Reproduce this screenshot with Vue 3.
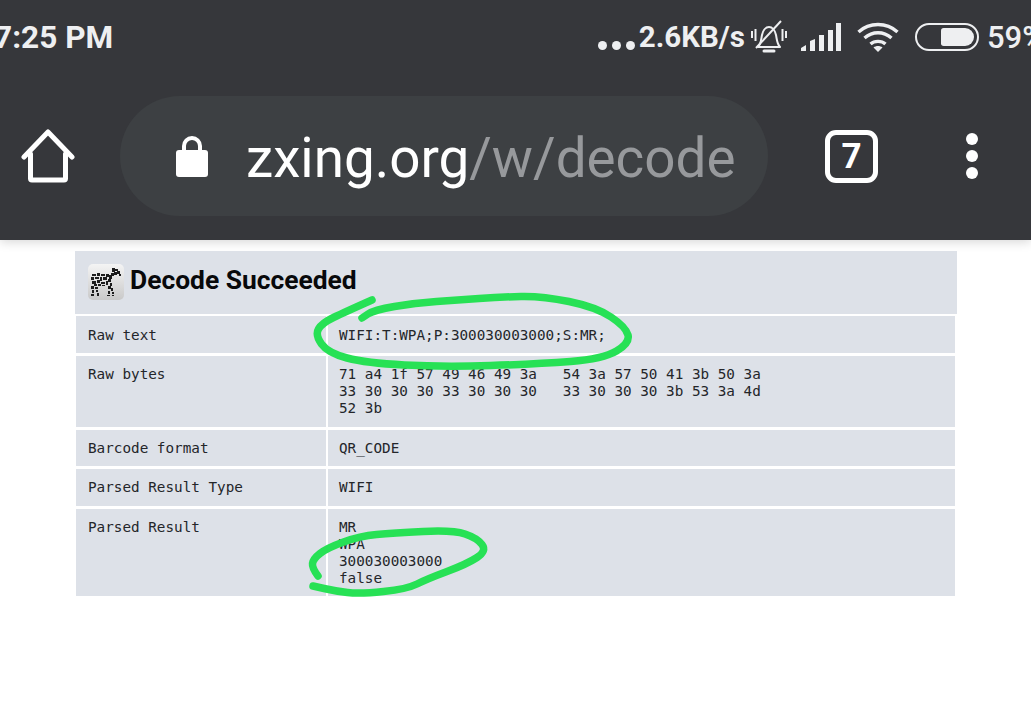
<script setup>
const rows = [
  { label: 'Raw text', value: 'WIFI:T:WPA;P:300030003000;S:MR;', cls: 'row-raw' },
  { label: 'Raw bytes', value: '71 a4 1f 57 49 46 49 3a   54 3a 57 50 41 3b 50 3a\n33 30 30 30 33 30 30 30   33 30 30 30 3b 53 3a 4d\n52 3b', cls: 'row-bytes' },
  { label: 'Barcode format', value: 'QR_CODE', cls: 'row-one' },
  { label: 'Parsed Result Type', value: 'WIFI', cls: 'row-type' },
  { label: 'Parsed Result', value: 'MR\nWPA\n300030003000\nfalse', cls: 'row-parsed' }
]

// zebra logo blobs, x y w h in a 36 box
const zebra = [
  [24, 4, 3, 4], [27, 5, 3, 2], [29, 7, 3, 3], [26, 8, 3, 3], [31, 10, 2, 2], [23, 9, 3, 3], [21, 11, 3, 4],
  [4, 10, 4, 2], [9, 9, 3, 3], [13, 10, 4, 2], [18, 10, 3, 3], [3, 13, 3, 3], [7, 13, 4, 2], [12, 13, 2, 4],
  [15, 13, 4, 3], [20, 15, 3, 3], [4, 17, 4, 3], [9, 16, 3, 3], [13, 18, 4, 2], [18, 17, 2, 4], [22, 19, 2, 3],
  [6, 20, 3, 2], [10, 20, 3, 2], [14, 21, 3, 1], [3, 22, 3, 3], [7, 23, 3, 2], [20, 22, 3, 3], [23, 24, 2, 3],
  [4, 26, 2, 3], [8, 26, 2, 2], [20, 27, 2, 3], [24, 28, 2, 2], [3, 30, 3, 2], [9, 29, 2, 3], [19, 31, 3, 1], [24, 31, 2, 1]
]

// hand drawn marker strokes, smoothed through the midpoints
const smooth = (pts) => {
  let d = `M${pts[0][0]} ${pts[0][1]}`
  for (let i = 1; i < pts.length - 1; i++) {
    const mx = (pts[i][0] + pts[i + 1][0]) / 2
    const my = (pts[i][1] + pts[i + 1][1]) / 2
    d += `Q${pts[i][0]} ${pts[i][1]} ${mx} ${my}`
  }
  const last = pts[pts.length - 1]
  return d + `L${last[0]} ${last[1]}`
}

const inkTop = smooth([
  [372, 300], [345, 312], [322, 323], [315, 335], [328, 353], [366, 363], [443, 367], [538, 364], [603, 359],
  [630, 343], [626, 327], [596, 307], [542, 296], [500, 297], [458, 300], [415, 303], [374, 310], [362, 318]
])
const inkBottom = smooth([
  [318, 576], [312, 568], [313, 559], [327, 548], [360, 536], [393, 533], [453, 530], [477, 538], [487, 551],
  [467, 564], [427, 579], [407, 589], [360, 594], [335, 591], [313, 586]
])
</script>

<template>
  <div class="page">
    <header class="chrome">
      <div class="status">
        <span class="clock">7:25 PM</span>
        <div class="status-right">
          <span class="more"><i></i><i></i><i></i></span>
          <span class="speed">2.6KB/s</span>
          <svg class="bell" width="36" height="34" viewBox="0 0 36 34" fill="none" stroke="#eeeff1" stroke-width="2">
            <path d="M7 27c3-3 3-7 4-12 1-5 4-8 7-8s6 3 7 8c1 5 1 9 4 12z" stroke-linejoin="round" />
            <path d="M13 31h10" stroke-width="3" stroke-linecap="round" />
            <path d="M5 28 30 1" stroke-width="2" />
            <path d="M1 11v7M4.500 9v12M31.500 9v12M35 11v7" stroke-width="2" />
          </svg>
          <svg class="signal" width="40" height="28" viewBox="0 0 40 28" fill="#eeeff1">
            <path d="M0 28v-3l5-3v6zM9 28v-10l5-2v12zM18 28v-16h5v16zM27 28v-21h5v21zM35 28v-28h5v28z" />
          </svg>
          <svg class="wifi" width="42" height="30" viewBox="0 0 42 30" fill="none" stroke="#eeeff1" stroke-width="3.400">
            <path d="M1.500 10c11-10 28-10 39 0" />
            <path d="M7.500 16c8-7 19-7 27 0" />
            <path d="M13.500 22c4-3.500 11-3.500 15 0" />
            <path d="M21 30l-4.500-4.500c2.500-2 6.500-2 9 0z" fill="#eeeff1" stroke="none" />
          </svg>
          <span class="battery"><i></i></span>
          <span class="percent">59%</span>
        </div>
      </div>
      <nav class="toolbar">
        <svg class="home" width="54" height="54" viewBox="0 0 54 54" fill="none" stroke="#fff" stroke-width="5" stroke-linejoin="round" stroke-linecap="round">
          <path d="M3 28 27 3l24 25" />
          <path d="M9.500 25v24.500a1.500 1.500 0 0 0 1.500 1.500h32a1.500 1.500 0 0 0 1.500-1.500v-24.500" />
        </svg>
        <div class="omnibox">
          <svg class="lock" width="32" height="42" viewBox="0 0 32 42" fill="#fff">
            <path d="M8 18v-7a8 8 0 0 1 16 0v7" fill="none" stroke="#fff" stroke-width="4" />
            <rect x="0" y="15" width="32" height="27" rx="3" />
          </svg>
          <span class="url">zxing.org<span class="url-path">/w/decode</span></span>
        </div>
        <span class="tabs">7</span>
        <span class="menu"><i></i><i></i><i></i></span>
      </nav>
    </header>

    <main class="result">
      <div class="title">
        <svg class="logo" width="36" height="36" viewBox="0 0 36 36">
          <defs>
            <linearGradient id="logo-bg" x1="0" y1="0" x2="0" y2="1">
              <stop offset="0" stop-color="#f4f4f4" />
              <stop offset="1" stop-color="#c9c9c9" />
            </linearGradient>
          </defs>
          <rect width="36" height="36" rx="5" fill="url(#logo-bg)" />
          <rect v-for="(b, i) in zebra" :key="i" :x="b[0]" :y="b[1]" :width="b[2]" :height="b[3]" fill="#1c1c1c" />
        </svg>
        <h1>Decode Succeeded</h1>
      </div>
      <div class="rows">
        <div v-for="row in rows" :key="row.label" class="row" :class="row.cls">
          <div class="cell cell-label">{{ row.label }}</div>
          <pre class="cell cell-value">{{ row.value }}</pre>
        </div>
      </div>
      <svg class="ink" width="1031" height="723" viewBox="0 0 1031 723" fill="none" stroke="#27e155" stroke-width="7.500" stroke-linecap="round" stroke-linejoin="round">
        <path :d="inkTop" />
        <path :d="inkBottom" />
      </svg>
    </main>
  </div>
</template>

<style scoped>
.page {
  position: relative;
  width: 1031px;
  height: 723px;
  overflow: hidden;
  background: #fff;
}
.chrome {
  height: 240px;
  background: #36373b;
  box-shadow: 0 2px 10px rgba(0, 0, 0, 0.16);
  color: #fff;
  font-family: Roboto, sans-serif;
}
.status {
  height: 74px;
  display: flex;
  align-items: center;
  justify-content: space-between;
  color: #eeeff1;
}
.clock {
  margin-left: -6px;
  font-size: 31.600px;
  font-weight: 700;
}
.status-right {
  display: flex;
  align-items: center;
  margin-right: -14px;
}
.more {
  display: flex;
  gap: 5px;
  margin-top: 16px;
  margin-right: 4px;
}
.more i {
  width: 9px;
  height: 9px;
  border-radius: 50%;
  background: #eeeff1;
}
.speed {
  font-size: 29.500px;
  font-weight: 700;
}
.bell {
  margin-left: 6px;
}
.signal {
  margin-left: 14px;
}
.wifi {
  margin-left: 16px;
}
.battery {
  box-sizing: border-box;
  width: 64px;
  height: 28px;
  margin-left: 16px;
  padding: 3px;
  display: flex;
  justify-content: flex-end;
  border: 2px solid #eeeff1;
  border-radius: 14px;
}
.battery i {
  width: 33px;
  background: #eeeff1;
  border-radius: 3px 10px 10px 3px;
}
.percent {
  margin-left: 8px;
  font-size: 31px;
  font-weight: 500;
}
.toolbar {
  height: 120px;
  margin-top: 22px;
  display: flex;
  align-items: center;
}
.home {
  margin-left: 21px;
}
.omnibox {
  width: 648px;
  height: 120px;
  margin-left: 45px;
  display: flex;
  align-items: center;
  background: #3d4043;
  border-radius: 60px;
}
.lock {
  margin-left: 56px;
}
.url {
  margin-left: 38px;
  margin-top: 4px;
  font-size: 54.800px;
  white-space: nowrap;
}
.url-path {
  color: #97999c;
}
.tabs {
  box-sizing: border-box;
  width: 53px;
  height: 53px;
  margin-left: 57px;
  display: flex;
  align-items: center;
  justify-content: center;
  border: 5px solid #fff;
  border-radius: 11px;
  font-size: 35px;
  font-weight: 700;
}
.menu {
  margin-left: 88px;
  display: flex;
  flex-direction: column;
  gap: 5px;
}
.menu i {
  width: 12px;
  height: 12px;
  border-radius: 50%;
  background: #fff;
}
.result {
  margin: 11px 0 0 75px;
  width: 882px;
}
.title {
  height: 63px;
  display: flex;
  align-items: center;
  gap: 6px;
  padding: 0 0 2px 13px;
  box-sizing: border-box;
  background: #dde1e8;
}
.title h1 {
  margin: 0 0 3px;
  font-family: Roboto, sans-serif;
  font-size: 26.400px;
  font-weight: 700;
  color: #08090b;
}
.rows {
  margin: 2px 2px 0 1px;
  display: flex;
  flex-direction: column;
  gap: 3px;
}
.row {
  display: grid;
  grid-template-columns: 250px 1fr;
  column-gap: 2px;
}
.row-raw { height: 37px; }
.row-bytes { height: 71px; }
.row-one { height: 36px; }
.row-type { height: 37px; }
.row-parsed { height: 87px; }
.cell {
  margin: 0;
  padding: 11px 11px 0 12px;
  background: #dde1e8;
  font-family: "DejaVu Sans Mono", monospace;
  font-size: 14.300px;
  line-height: 17px;
  color: #24262a;
}
.cell-value {
  padding-left: 11px;
}
.row-bytes .cell,
.row-one .cell,
.row-type .cell,
.row-parsed .cell {
  padding-top: 10px;
}
.ink {
  position: absolute;
  left: 0;
  top: 0;
  pointer-events: none;
}
</style>
